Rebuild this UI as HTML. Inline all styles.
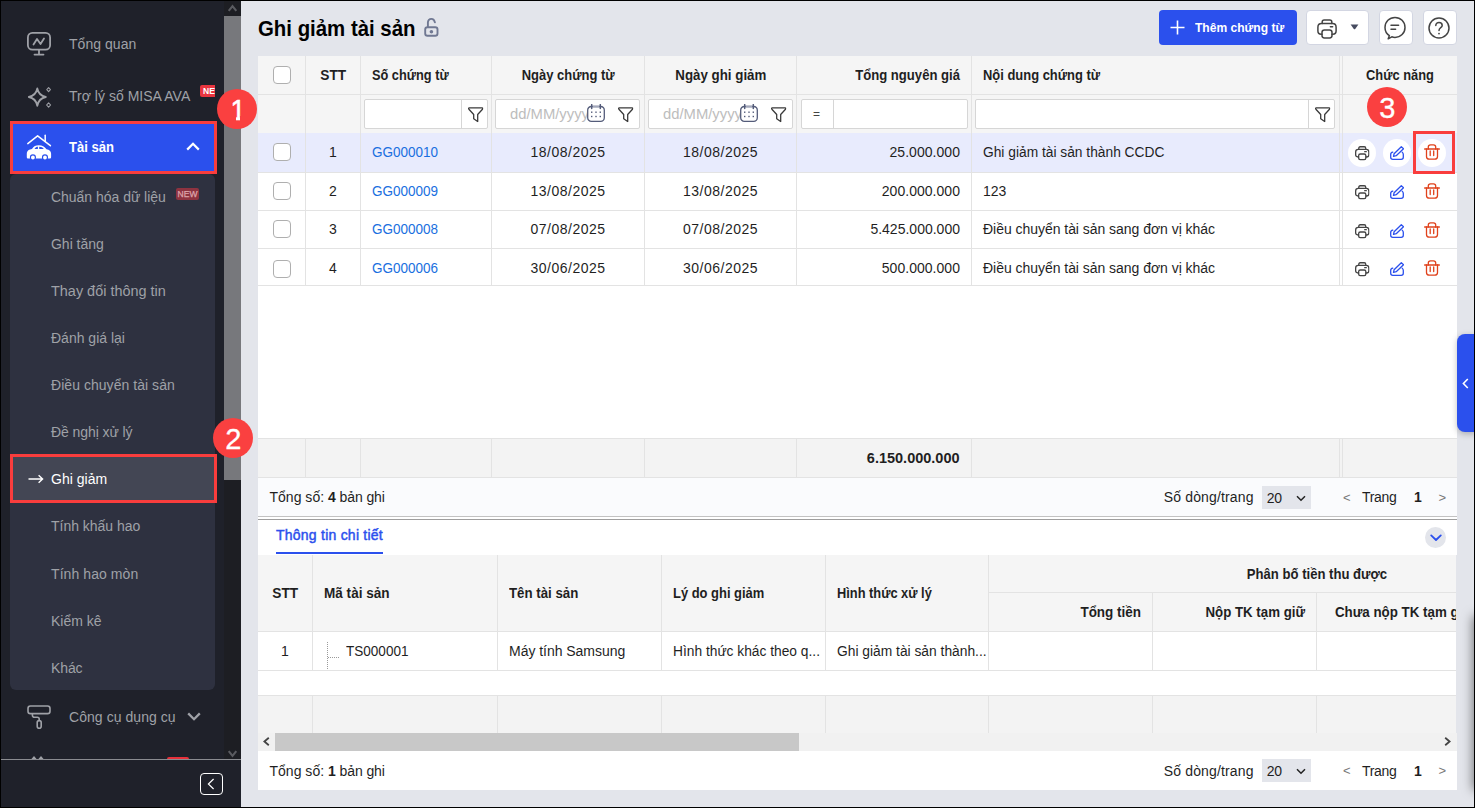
<!DOCTYPE html>
<html lang="vi">
<head>
<meta charset="utf-8">
<title>Ghi giảm tài sản</title>
<style>
*{box-sizing:border-box;margin:0;padding:0}
html,body{width:1475px;height:808px;overflow:hidden;background:#000}
body{font-family:"Liberation Sans",sans-serif;font-size:14px;color:#1f1f1f;position:relative}
.abs{position:absolute}
#frame{position:absolute;left:1px;top:1px;width:1473px;height:806px;overflow:hidden;background:#e3e5eb}
/* ---------- sidebar ---------- */
#side{position:absolute;left:0;top:0;width:240px;height:806px;background:#1f212a;overflow:hidden}
#side .mi{position:absolute;left:68px;color:#9fa1a7;font-size:14px;line-height:20px;white-space:nowrap;}
#side .si{position:absolute;left:50px;color:#9fa1a7;font-size:14px;line-height:20px;white-space:nowrap;}
#submenu{position:absolute;left:9px;top:173px;width:205px;height:516px;background:#2e3140;border-radius:6px}
#sb{position:absolute;left:223px;top:0;width:17px;height:758px;background:#1d1e23}
#sbthumb{position:absolute;left:0;top:15px;width:17px;height:464px;background:#77787c}
#sfoot{position:absolute;left:0;top:758px;width:240px;height:48px;background:#1f212a;border-top:1px solid #8a8b90}
.new{position:absolute;font-size:8px;line-height:12px;height:12px;border-radius:2px;color:#fff;font-weight:bold;text-align:center}
.redbox{position:absolute;border:3px solid #f93d3d}
.num{position:absolute;width:40px;height:40px;border-radius:50%;background:#fa4040;color:#fff;font-size:30px;line-height:40px;text-align:center;-webkit-text-stroke:.3px #fff}
.num span{display:inline-block;transform:translateY(1.4px) scaleX(.97)}
/* ---------- main ---------- */
#title{position:absolute;left:257px;top:14px;font-size:22px;font-weight:bold;color:#000;line-height:28px;white-space:nowrap}
.btn{position:absolute;top:9px;height:35px;border-radius:4px;background:#fff;border:1px solid #d3d6e2}
table{border-collapse:separate;border-spacing:0;table-layout:fixed}
td,th{overflow:hidden;white-space:nowrap;font-weight:normal}
#g1{position:absolute;left:257px;top:55px;width:1199px;background:#fff}
#g1 th{height:39px;background:#f5f5f5;border-right:1px solid #e3e3e3;border-bottom:1px solid #e3e3e3;font-weight:bold;font-size:14px;color:#1f1f1f;padding:0 11px}
#g1 tr.f td{height:38px;background:#f5f5f5;border-right:1px solid #e3e3e3;position:relative}
#g1 tr.r td{vertical-align:top;line-height:36px;border-right:1px solid #e3e3e3;border-bottom:1px solid #e3e3e3;padding:0 11px;font-size:14px;position:relative}
#g1 tr.r1 td{line-height:38px}
#g1 tr.r4 td{padding-top:2px;line-height:34px}
#g1 tr.r td .cb{margin-top:9px}
#g1 tr.r1 td .cb{margin-top:10px}
#g1 .last{border-right:0 !important;position:relative;padding:0}
#g1 .last::before{content:"";position:absolute;left:2px;top:0;bottom:0;width:1px;background:#e3e3e3}
#g1 tr.sel td{background:#e8ebfd}
.c{text-align:center}.rt{text-align:right}.l{text-align:left}
.cb{display:block;width:18px;height:18px;border:1px solid #afafaf;border-radius:4px;background:#fff;margin:0 auto}
a.lk{color:#1a6fe0;text-decoration:none}
.inp{position:absolute;top:4px;height:30px;background:#fff;border:1px solid #d6d6d6;border-radius:2px}
.ph{position:absolute;left:14px;top:6px;font-size:14px;color:#bdbdbd;line-height:16px}
#sum1{position:absolute;left:257px;top:437px;width:1199px;height:40px;background:#f3f3f3;border-top:1px solid #e3e3e3;border-bottom:1px solid #e3e3e3}
.vl{position:absolute;top:0;width:1px;height:100%;background:#e3e3e3}
.pg{position:absolute;left:257px;width:1199px;height:39px;font-size:14px;line-height:40px}
.pg>span,.sel20>span{position:absolute;white-space:pre}
.sel20{position:absolute;width:49px;height:23px;background:#e3e5eb;top:8px;line-height:24px}
#split{position:absolute;left:257px;top:515px;width:1199px;height:4px;background:#fff;border-top:1px solid #c2c2c2;border-bottom:1px solid #9e9e9e}
#tabs{position:absolute;left:257px;top:519px;width:1199px;height:35px;background:#fff}
#g2{position:absolute;left:257px;top:554px;width:1198px;height:178px;background:#fff;overflow:hidden}
#g2 table{position:absolute;left:0;top:0;width:1400px}
#g2 th{background:#f5f5f5;border-right:1px solid #e3e3e3;border-bottom:1px solid #e3e3e3;font-weight:bold;font-size:14px;padding:0 11px}
#g2 td{height:39px;border-right:1px solid #e3e3e3;border-bottom:1px solid #e3e3e3;padding:0 11px;font-size:14px;position:relative}
#sum2{position:absolute;left:0;top:140px;width:1400px;height:38px;background:#f3f3f3;border-top:1px solid #e3e3e3}
#hs{position:absolute;left:257px;top:732px;width:1199px;height:18px;background:#f1f1f1}
#hsthumb{position:absolute;left:17px;top:0;width:524px;height:18px;background:#c8c8c8}
svg{display:block;overflow:visible}
.ic{position:absolute}
</style>
</head>
<body>
<div id="frame">
<svg width="0" height="0" style="position:absolute">
 <defs>
  <symbol id="i-print" viewBox="0 0 20 20"><g fill="none" stroke-linejoin="round" stroke-linecap="round"><path d="M5.2 4.6 V3 C5.2 1.8 5.9 1 7.2 1 H12.8 C14.1 1 14.8 1.8 14.8 3 V4.6"/><path d="M5 15.2 H4.2 C2 15.2 0.9 14 0.9 12 V8.2 C0.9 5.8 2.2 4.6 4.6 4.6 H15.4 C17.8 4.6 19.1 5.8 19.1 8.2 V12 C19.1 14 18 15.2 15.800 15.2 H15"/><rect x="5" y="11" width="10" height="8" rx="2.4"/><path d="M13.4 7.800 H15.600"/></g></symbol>
  <symbol id="i-filter" viewBox="0 0 15.4 15.4"><path d="M1.400 0.800 H14 Q15.300 1 14.500 2.200 L9.700 7.500 V14.500 L5.700 11.800 V7.500 L0.900 2.200 Q0.100 1 1.400 0.800 Z" fill="none" stroke-width="1.3" stroke-linejoin="round"/></symbol>
  <symbol id="i-cal" viewBox="0 0 18 18"><g fill="none" stroke-linecap="round"><rect x="0.7" y="2.500" width="16.600" height="14.800" rx="3.600" stroke-width="1.300"/><path d="M5.600 2.600 H12.400" stroke="#a3a8bb" stroke-width="1.800" stroke-linecap="butt"/><path d="M4.700 0.600 V4.400 M13.300 0.600 V4.400" stroke-width="1.500"/></g><g stroke="none"><rect x="4" y="7.500" width="1.400" height="1.400"/><rect x="8.300" y="7.500" width="1.400" height="1.400"/><rect x="12.600" y="7.500" width="1.400" height="1.400"/><rect x="4" y="11.800" width="1.400" height="1.400"/><rect x="8.300" y="11.800" width="1.400" height="1.400"/><rect x="12.600" y="11.800" width="1.400" height="1.400"/></g></symbol>
  <symbol id="i-edit" viewBox="0 0 14 14"><g fill="none" stroke-linejoin="round" stroke-linecap="round"><path d="M11.3 0.7 L13.500 2.700 L6.200 9.700 L3.500 10.400 L4.100 7.700 Z"/><path d="M2.800 6.200 C1.300 6.400 0.700 7.300 0.700 8.600 V11.200 C0.700 12.600 1.400 13.3 2.800 13.3 H11.200 C12.600 13.3 13.3 12.600 13.3 11.200 V8.400 C13.3 7.400 13 6.700 12.200 6.200"/></g></symbol>
  <symbol id="i-trash" viewBox="0 0 16 16"><g fill="none" stroke-linecap="round" stroke-linejoin="round"><path d="M0.6 5 H15.400"/><path d="M4.300 5 V3 C4.300 1.600 5.100 0.800 6.500 0.800 H9.500 C10.900 0.800 11.700 1.600 11.700 3 V5"/><path d="M2.500 5 V12.400 C2.500 14.200 3.500 15.200 5.300 15.200 H10.700 C12.500 15.200 13.500 14.200 13.500 12.400 V5"/><path d="M6.200 7 V11.600 M9.700 7 V11.600"/></g></symbol>
 </defs>
</svg>


<!-- ================= SIDEBAR ================= -->
<div id="side">
  <div id="sb"><div id="sbthumb"></div>
    <svg class="ic" style="left:4px;top:3px" width="9" height="8" viewBox="0 0 9 8"><path d="M0.7 6.800 L4.500 2.200 L8.300 6.800" fill="none" stroke="#5a5b60" stroke-width="2.100"/></svg>
    <svg class="ic" style="left:4px;top:749.300px" width="9" height="8" viewBox="0 0 9 8"><path d="M0.7 1.200 L4.500 5.800 L8.300 1.200" fill="none" stroke="#5a5b60" stroke-width="2.100"/></svg>
  </div>
  
  <!-- Tổng quan -->
  <svg class="ic" style="left:26px;top:31px" width="24" height="24" viewBox="0 0 24 24" fill="none" stroke="#9fa1a7" stroke-width="1.8" stroke-linecap="round" stroke-linejoin="round"><rect x="0.9" y="0.9" width="22.2" height="16.8" rx="4.5"/><path d="M6.5 12.5 L10 7 L13.5 12 L17 6.5"/><path d="M12 18 V22.300 M7.500 22.600 H16.500"/></svg>
  <div class="mi" style="top:33px"><span style="letter-spacing:0.039px">Tổng quan</span></div>
  <!-- Trợ lý số -->
  <svg class="ic" style="left:26px;top:86px" width="26" height="22" viewBox="0 0 26 22" fill="none" stroke="#9fa1a7" stroke-width="1.800" stroke-linejoin="round"><path d="M10.3 1.5 C11.3 6.5 13.5 9 18.8 10 C13.5 11 11.3 13.5 10.3 18.8 C9.3 13.5 7 11 1.8 10 C7 9 9.3 6.5 10.3 1.5 Z"/><path d="M21.6 0.6 L23.4 2.6 L21.6 4.6 L19.8 2.6 Z" stroke-width="1.1"/><path d="M21.6 15.8 L23.6 18 L21.6 20.2 L19.6 18 Z" stroke-width="1.1"/></svg>
  <div class="mi" style="top:85px"><span style="letter-spacing:0.019px">Trợ lý số MISA AVA</span></div>
  <div class="abs" style="left:199px;top:84px;width:15px;height:12px;overflow:hidden"><div class="new" style="left:0;top:0;width:26px;background:#e9353f;padding-left:3px;text-align:left;font-size:8.5px;font-weight:bold;letter-spacing:0">NEW</div></div>
  <!-- Tài sản (active) -->
  <div class="abs" style="left:12px;top:123px;width:201px;height:47px;background:#2b50ed"></div>
  <svg class="ic" style="left:25px;top:133px" width="27" height="26" viewBox="0 0 27 26"><path d="M1.800 9.600 L11.600 1.800 L24.400 11.700" fill="none" stroke="#fff" stroke-width="1.5" stroke-linecap="round" stroke-linejoin="round"/><path d="M19.2 1.2 V7.6" fill="none" stroke="#fff" stroke-width="1.5" stroke-linecap="round"/><g transform="translate(0.03,0.8) scale(0.957,1)"><path d="M0.8 19.2 C0.8 15.6 3.4 14.6 6.2 14.2 C8 11.4 10 10.4 13.4 10.4 C17 10.4 19.2 11.6 21.4 14.4 C24.4 14.8 26.2 16.2 26.2 19 V22.2 C26.2 23.2 25.6 23.8 24.6 23.8 H2.4 C1.4 23.8 0.8 23.2 0.8 22.2 Z" fill="#fff"/><path d="M8.8 14.2 C9.8 12.6 11 12 12.4 12 V14.2 Z M13.8 12 C16 12 17.6 12.8 18.6 14.2 H13.8 Z" fill="#2b50ed"/><circle cx="7.2" cy="22.6" r="2.6" fill="#fff" stroke="#2b50ed" stroke-width="1.2"/><circle cx="19.8" cy="22.6" r="2.6" fill="#fff" stroke="#2b50ed" stroke-width="1.2"/></g></svg>
  <div class="mi" style="top:136px;color:#fff;font-weight:bold"><span style="display:inline-block;transform:scaleX(0.9326);transform-origin:0 50%">Tài sản</span></div>
  <svg class="ic" style="left:185px;top:141px" width="14" height="9" viewBox="0 0 14 9"><path d="M1.2 7.6 L7 1.8 L12.8 7.6" fill="none" stroke="#fff" stroke-width="2.2"/></svg>
  <div class="redbox" style="left:9px;top:120px;width:207px;height:53px"></div>
  <!-- submenu -->
  <div id="submenu">
    <div class="si" style="left:41px;top:13px"><span style="letter-spacing:-0.026px">Chuẩn hóa dữ liệu</span></div>
    <div class="si" style="left:41px;top:60px"><span style="letter-spacing:-0.017px">Ghi tăng</span></div>
    <div class="si" style="left:41px;top:107px"><span style="display:inline-block;transform:scaleX(1.0315);transform-origin:0 50%">Thay đổi thông tin</span></div>
    <div class="si" style="left:41px;top:154px"><span style="letter-spacing:-0.003px">Đánh giá lại</span></div>
    <div class="si" style="left:41px;top:201px"><span style="letter-spacing:0.044px">Điều chuyển tài sản</span></div>
    <div class="si" style="left:41px;top:248px"><span style="letter-spacing:-0.079px">Đề nghị xử lý</span></div>
    <div class="si" style="left:41px;top:342px"><span style="letter-spacing:-0.017px">Tính khấu hao</span></div>
    <div class="si" style="left:41px;top:390px"><span style="letter-spacing:0.076px">Tính hao mòn</span></div>
    <div class="si" style="left:41px;top:437px"><span style="letter-spacing:-0.011px">Kiểm kê</span></div>
    <div class="si" style="left:41px;top:484px"><span style="letter-spacing:-0.105px">Khác</span></div>
    <div class="new" style="left:166px;top:14px;width:23px;background:#8e3340;color:#dfa5ab;font-size:8.500px;font-weight:normal;letter-spacing:0;-webkit-text-stroke:.25px #dfa5ab">NEW</div>
    <div class="abs" style="left:3px;top:283px;width:201px;height:43px;background:#434654"></div>
    <svg class="ic" style="left:18px;top:300px" width="16" height="10" viewBox="0 0 16 10"><path d="M0.5 5 H14.5 M10.6 1.2 L14.6 5 L10.6 8.8" fill="none" stroke="#fff" stroke-width="1.4"/></svg>
    <div class="si" style="left:41px;top:295px;color:#fff"><span style="letter-spacing:0.021px">Ghi giảm</span></div>
  </div>
  <div class="redbox" style="left:9px;top:453px;width:207px;height:49px"></div>
  <!-- Công cụ dụng cụ -->
  <svg class="ic" style="left:26px;top:704px" width="25" height="25" viewBox="0 0 25 25" fill="none" stroke="#9fa1a7" stroke-width="1.6" stroke-linejoin="round"><rect x="1" y="1" width="22" height="7.6" rx="2.4"/><path d="M5.4 8.6 V10.2 C5.4 11.6 6.2 12.2 7.6 12.2 H10.4 C11.6 12.2 12.2 12.8 12.2 14 V15.6"/><rect x="10.2" y="15.6" width="4" height="7.6" rx="2"/></svg>
  <div class="mi" style="top:706px"><span style="letter-spacing:0.056px">Công cụ dụng cụ</span></div>
  <svg class="ic" style="left:186px;top:711px" width="14" height="9" viewBox="0 0 14 9"><path d="M1.2 1.4 L7 7.2 L12.8 1.4" fill="none" stroke="#9fa1a7" stroke-width="2.3"/></svg>
  <!-- partially visible next item -->
  <svg class="ic" style="left:30px;top:755px" width="14" height="4" viewBox="0 0 14 4"><path d="M0.500 4 L3 1 L5.500 4 M7.500 4 L10 1 L12.500 4" fill="none" stroke="#9fa1a7" stroke-width="1.3"/></svg>
  <div class="abs" style="left:166px;top:756px;width:22px;height:3px;background:#e8303a;border-radius:2px 2px 0 0"></div>
  <div id="sfoot">
    <div class="abs" style="left:199px;top:13px;width:23px;height:22px;border:1px solid #fff;border-radius:4px"></div>
    <svg class="ic" style="left:206px;top:18px" width="8" height="12" viewBox="0 0 8 12"><path d="M6.6 1 L1.4 6 L6.6 11" fill="none" stroke="#fff" stroke-width="1.2"/></svg>
  </div>

</div>

<!-- ================= MAIN ================= -->
<div id="title"><span style="display:inline-block;transform:scaleX(0.9268);transform-origin:0 50%">Ghi giảm tài sản</span></div>
<div class="abs" style="left:423.200px;top:16px"><svg width="15" height="20" viewBox="0 0 15 20" fill="none" stroke="#707892" stroke-width="1.9" stroke-linecap="round"><path d="M3.900 10 V5.600 C3.900 3.300 5.300 1.900 7.400 1.900 C9.200 1.900 10.400 3 10.900 5.400"/><rect x="1.200" y="10.300" width="12.300" height="8.500" rx="2.300"/><circle cx="7.400" cy="14.700" r="1.800" fill="#707892" stroke="none"/></svg></div>
<!-- header buttons -->
<div class="btn" style="left:1158px;width:138px;background:#2b50ed;border:0"></div>
<svg class="ic" style="left:1168.500px;top:19px" width="15" height="15" viewBox="0 0 15 15"><path d="M7.5 0.5 V14.5 M0.5 7.5 H14.5" stroke="#fff" stroke-width="1.6" fill="none"/></svg>
<div class="abs" style="left:1193.700px;top:19px;font-size:13px;font-weight:bold;color:#fff;line-height:16px;white-space:nowrap"><span style="display:inline-block;transform:scaleX(0.9281);transform-origin:0 50%">Thêm chứng từ</span></div>
<div class="btn" style="left:1305px;width:63px"></div>
<svg class="ic" style="left:1316px;top:17.500px;stroke:#444;stroke-width:1.5" width="20" height="20"><use href="#i-print"/></svg>
<svg class="ic" style="left:1349px;top:23px" width="9" height="6" viewBox="0 0 9 6"><path d="M0.6 0.6 H8.4 L5.2 5 Q4.5 5.6 3.8 5 Z" fill="#474c60"/></svg>
<div class="btn" style="left:1378px;width:34px"></div>
<svg class="ic" style="left:1383.400px;top:15px" width="22" height="24" viewBox="0 0 22 24" fill="none" stroke="#444" stroke-width="1.5" stroke-linecap="round" stroke-linejoin="round"><path d="M5.4 19.6 C2.6 17.8 1 15 1 11.4 C1 5.6 5.4 1.4 11 1.4 C16.6 1.4 21 5.6 21 11.4 C21 17.2 16.6 21.4 11 21.4 C9.8 21.4 8.8 21.2 7.8 20.8 L4.2 22.8 Z"/><path d="M7 9.2 H14.6 M7 13.2 H11.6"/></svg>
<div class="btn" style="left:1422px;width:34px"></div>
<svg class="ic" style="left:1427.200px;top:16.200px" width="22" height="22" viewBox="0 0 22 22" fill="none" stroke="#444" stroke-width="1.5" stroke-linecap="round"><circle cx="11" cy="11" r="10"/><path d="M7.8 8.6 C7.8 6.6 9.2 5.4 11 5.4 C12.8 5.4 14.2 6.6 14.2 8.4 C14.2 10.6 11 10.8 11 13.4"/><circle cx="11" cy="16.6" r="0.9" fill="#444" stroke="none"/></svg>

<table id="g1">
 <colgroup><col style="width:48px"><col style="width:55px"><col style="width:131px"><col style="width:153px"><col style="width:152px"><col style="width:175px"><col style="width:368px"><col style="width:117px"></colgroup>
 <thead>
  <tr class="h"><th style="padding-left:0;padding-right:0"><span class="cb"></span></th><th class="c" style="padding-left:0;padding-right:0"><span style="display:inline-block;transform:scaleX(0.9791);transform-origin:50% 50%">STT</span></th><th class="l"><span style="display:inline-block;transform:scaleX(0.9124);transform-origin:0 50%">Số chứng từ</span></th><th class="c" style="padding-left:0;padding-right:0"><span style="display:inline-block;transform:scaleX(0.9272);transform-origin:50% 50%">Ngày chứng từ</span></th><th class="c" style="padding-left:0;padding-right:0"><span style="display:inline-block;transform:scaleX(0.9510);transform-origin:50% 50%">Ngày ghi giảm</span></th><th class="rt"><span style="display:inline-block;transform:scaleX(0.9357);transform-origin:100% 50%">Tổng nguyên giá</span></th><th class="l"><span style="display:inline-block;transform:scaleX(0.9242);transform-origin:0 50%">Nội dung chứng từ</span></th><th class="c last" style="padding:0 0 0 3px"><span style="display:inline-block;transform:scaleX(0.9172);transform-origin:50% 50%">Chức năng</span></th></tr>
  <tr class="f"><td></td><td></td>
   <td><div class="inp" style="left:3px;width:124px"><span class="abs" style="left:96px;top:0;width:1px;height:28px;background:#d6d6d6"></span><svg class="ic" style="left:103px;top:6.500px;stroke:#3a3a3a" width="15.400" height="15.400"><use href="#i-filter"/></svg></div></td>
   <td><div class="inp" style="left:3px;width:145px"><span class="ph"><span style="display:inline-block;transform:scaleX(1.0577);transform-origin:0 50%">dd/MM/yyyy</span></span><svg class="ic" style="left:91px;top:4px;stroke:#545c7a;fill:#545c7a;background:#fff" width="18" height="18"><use href="#i-cal"/></svg><svg class="ic" style="left:122px;top:6.500px;stroke:#3a3a3a" width="15.400" height="15.400"><use href="#i-filter"/></svg></div></td>
   <td><div class="inp" style="left:3px;width:145px"><span class="ph"><span style="display:inline-block;transform:scaleX(1.0577);transform-origin:0 50%">dd/MM/yyyy</span></span><svg class="ic" style="left:91px;top:4px;stroke:#545c7a;fill:#545c7a;background:#fff" width="18" height="18"><use href="#i-cal"/></svg><svg class="ic" style="left:122px;top:6.500px;stroke:#3a3a3a" width="15.400" height="15.400"><use href="#i-filter"/></svg></div></td>
   <td><div class="inp" style="left:4px;width:167px"><span class="abs" style="left:11px;top:6px;font-size:12px;line-height:16px;color:#444">=</span><span class="abs" style="left:31px;top:0;width:1px;height:28px;background:#d6d6d6"></span></div></td>
   <td><div class="inp" style="left:3px;width:360px"><span class="abs" style="left:332px;top:0;width:1px;height:28px;background:#d6d6d6"></span><svg class="ic" style="left:339px;top:6.500px;stroke:#3a3a3a" width="15.400" height="15.400"><use href="#i-filter"/></svg></div></td>
   <td class="last"></td></tr>
 </thead>
 <tbody>
  <tr class="r sel r1" style="height:40px"><td class="c" style="padding-left:0;padding-right:0"><span class="cb"></span></td><td class="c" style="padding-left:0;padding-right:0">1</td><td class="l"><a class="lk"><span style="display:inline-block;transform:scaleX(0.9635);transform-origin:0 50%">GG000010</span></a></td><td class="c" style="padding-left:0;padding-right:0"><span style="letter-spacing:0.492px">18/08/2025</span></td><td class="c" style="padding-left:0;padding-right:0"><span style="letter-spacing:0.492px">18/08/2025</span></td><td class="rt"><span style="letter-spacing:0.042px">25.000.000</span></td><td class="l"><span style="display:inline-block;transform:scaleX(0.9836);transform-origin:0 50%">Ghi giảm tài sản thành CCDC</span></td><td class="last"><span class="abs" style="left:8px;top:6px;width:28px;height:28px;border-radius:50%;background:#fff"></span><svg class="ic" style="left:14.75px;top:12.75px;stroke:#444;stroke-width:1.8" width="14.5" height="14.5"><use href="#i-print"/></svg><span class="abs" style="left:43px;top:6px;width:28px;height:28px;border-radius:50%;background:#fff"></span><svg class="ic" style="left:50.00px;top:12.70px;stroke:#2b50ed;stroke-width:1.3" width="14" height="14"><use href="#i-edit"/></svg><span class="abs" style="left:78px;top:6px;width:28px;height:28px;border-radius:50%;background:#fff"></span><svg class="ic" style="left:84.00px;top:11.20px;stroke:#e0421c;stroke-width:1.3" width="16" height="16"><use href="#i-trash"/></svg></td></tr>
  <tr class="r" style="height:38px"><td class="c" style="padding-left:0;padding-right:0"><span class="cb"></span></td><td class="c" style="padding-left:0;padding-right:0">2</td><td class="l"><a class="lk"><span style="display:inline-block;transform:scaleX(0.9635);transform-origin:0 50%">GG000009</span></a></td><td class="c" style="padding-left:0;padding-right:0"><span style="letter-spacing:0.492px">13/08/2025</span></td><td class="c" style="padding-left:0;padding-right:0"><span style="letter-spacing:0.492px">13/08/2025</span></td><td class="rt"><span style="letter-spacing:0.031px">200.000.000</span></td><td class="l"><span style="letter-spacing:-0.020px">123</span></td><td class="last"><svg class="ic" style="left:14.75px;top:11.75px;stroke:#444;stroke-width:1.8" width="14.5" height="14.5"><use href="#i-print"/></svg><svg class="ic" style="left:50.00px;top:11.70px;stroke:#2b50ed;stroke-width:1.3" width="14" height="14"><use href="#i-edit"/></svg><svg class="ic" style="left:84.00px;top:10.20px;stroke:#e0421c;stroke-width:1.3" width="16" height="16"><use href="#i-trash"/></svg></td></tr>
  <tr class="r" style="height:38px"><td class="c" style="padding-left:0;padding-right:0"><span class="cb"></span></td><td class="c" style="padding-left:0;padding-right:0">3</td><td class="l"><a class="lk"><span style="display:inline-block;transform:scaleX(0.9635);transform-origin:0 50%">GG000008</span></a></td><td class="c" style="padding-left:0;padding-right:0"><span style="letter-spacing:0.492px">07/08/2025</span></td><td class="c" style="padding-left:0;padding-right:0"><span style="letter-spacing:0.492px">07/08/2025</span></td><td class="rt"><span style="letter-spacing:0.005px">5.425.000.000</span></td><td class="l"><span style="letter-spacing:-0.037px">Điều chuyển tài sản sang đơn vị khác</span></td><td class="last"><svg class="ic" style="left:14.75px;top:12.75px;stroke:#444;stroke-width:1.8" width="14.5" height="14.5"><use href="#i-print"/></svg><svg class="ic" style="left:50.00px;top:12.70px;stroke:#2b50ed;stroke-width:1.3" width="14" height="14"><use href="#i-edit"/></svg><svg class="ic" style="left:84.00px;top:11.20px;stroke:#e0421c;stroke-width:1.3" width="16" height="16"><use href="#i-trash"/></svg></td></tr>
  <tr class="r r4" style="height:37px"><td class="c" style="padding-left:0;padding-right:0"><span class="cb"></span></td><td class="c" style="padding-left:0;padding-right:0">4</td><td class="l"><a class="lk"><span style="display:inline-block;transform:scaleX(0.9635);transform-origin:0 50%">GG000006</span></a></td><td class="c" style="padding-left:0;padding-right:0"><span style="letter-spacing:0.492px">30/06/2025</span></td><td class="c" style="padding-left:0;padding-right:0"><span style="letter-spacing:0.492px">30/06/2025</span></td><td class="rt"><span style="letter-spacing:0.031px">500.000.000</span></td><td class="l"><span style="letter-spacing:-0.037px">Điều chuyển tài sản sang đơn vị khác</span></td><td class="last"><svg class="ic" style="left:14.75px;top:12.75px;stroke:#444;stroke-width:1.8" width="14.5" height="14.5"><use href="#i-print"/></svg><svg class="ic" style="left:50.00px;top:12.70px;stroke:#2b50ed;stroke-width:1.3" width="14" height="14"><use href="#i-edit"/></svg><svg class="ic" style="left:84.00px;top:11.20px;stroke:#e0421c;stroke-width:1.3" width="16" height="16"><use href="#i-trash"/></svg></td></tr>
 </tbody>
</table>
<div class="abs" style="left:257px;top:285px;width:1199px;height:152px;background:#fff"></div>
<div id="sum1">
 <i class="vl" style="left:47px"></i><i class="vl" style="left:102px"></i><i class="vl" style="left:233px"></i><i class="vl" style="left:386px"></i><i class="vl" style="left:538px"></i><i class="vl" style="left:713px"></i><i class="vl" style="left:1081px"></i><i class="vl" style="left:1084px"></i>
 <div class="abs" style="left:537.500px;top:0;width:175px;padding-right:11px;text-align:right;font-weight:bold;font-size:14px;line-height:38px"><span style="display:inline-block;transform:scaleX(1.0354);transform-origin:100% 50%">6.150.000.000</span></div>
</div>
<div class="pg" style="top:477px;height:38px;line-height:39px;background:#fafbfd">
 <span style="left:11.500px"><span style="letter-spacing:0.014px">Tổng số: </span><b>4</b><span style="letter-spacing:-0.104px"> bản ghi</span></span>
 <span style="left:905.800px"><span style="letter-spacing:0.141px">Số dòng/trang</span></span>
 <div class="sel20" style="left:1004px"><span style="left:4.700px"><span style="letter-spacing:-0.139px">20</span></span><svg class="ic" style="left:34px;top:8.500px" width="10" height="7" viewBox="0 0 10 7"><path d="M1 1.2 L5 5.2 L9 1.2" fill="none" stroke="#222" stroke-width="1.5"/></svg></div>
 <span style="left:1085px;color:#777;font-size:13px">&lt;</span><span style="left:1104px"><span style="letter-spacing:-0.292px">Trang</span></span><span style="left:1156px"><b>1</b></span><span style="left:1180.500px;color:#777;font-size:13px">&gt;</span>
</div>
<div id="split"></div>


<div id="tabs">
 <div class="abs" style="left:18px;top:5px;font-size:14px;line-height:20px;color:#2b50ed;white-space:nowrap;-webkit-text-stroke:.45px #2b50ed"><span style="letter-spacing:0.237px">Thông tin chi tiết</span></div>
 <div class="abs" style="left:18px;top:32px;width:107px;height:2px;background:#2b50ed"></div>
 <div class="abs" style="left:1167px;top:6.500px;width:21px;height:21px;border-radius:50%;background:#e3e5eb"></div>
 <svg class="ic" style="left:1171.500px;top:13.500px" width="12" height="8" viewBox="0 0 12 8"><path d="M1.2 1.4 L6 6 L10.800 1.4" fill="none" stroke="#2b50ed" stroke-width="1.8" stroke-linecap="round" stroke-linejoin="round"/></svg>
</div>
<div id="g2">
 <table>
  <colgroup><col style="width:55px"><col style="width:185px"><col style="width:164px"><col style="width:164px"><col style="width:163px"><col style="width:164px"><col style="width:164px"><col style="width:164px"><col style="width:177px"></colgroup>
  <thead>
   <tr><th rowspan="2" class="c" style="height:77px;padding:0"><span style="display:inline-block;transform:scaleX(0.9791);transform-origin:50% 50%">STT</span></th><th rowspan="2" class="l"><span style="display:inline-block;transform:scaleX(0.9689);transform-origin:0 50%">Mã tài sản</span></th><th rowspan="2" class="l"><span style="display:inline-block;transform:scaleX(0.9475);transform-origin:0 50%">Tên tài sản</span></th><th rowspan="2" class="l"><span style="display:inline-block;transform:scaleX(0.9243);transform-origin:0 50%">Lý do ghi giảm</span></th><th rowspan="2" class="l"><span style="display:inline-block;transform:scaleX(0.9158);transform-origin:0 50%">Hình thức xử lý</span></th><th colspan="4" class="c" style="height:38px"><span style="position:relative;left:-6.500px"><span style="display:inline-block;transform:scaleX(0.9354);transform-origin:50% 50%">Phân bố tiền thu được</span></span></th></tr>
   <tr><th class="rt" style="height:39px"><span style="display:inline-block;transform:scaleX(0.9619);transform-origin:100% 50%">Tổng tiền</span></th><th class="rt"><span style="display:inline-block;transform:scaleX(0.9473);transform-origin:100% 50%">Nộp TK tạm giữ</span></th><th class="rt"><span style="display:inline-block;transform:scaleX(0.9518);transform-origin:100% 50%">Chưa nộp TK tạm giữ</span></th><th class="rt">Chi phí xử lý</th></tr>
  </thead>
  <tbody>
   <tr><td class="c" style="padding:0">1</td><td class="l" style="padding-left:33px"><span class="abs" style="left:14px;top:10px;height:29px;border-left:1px dotted #9a9a9a"></span><span class="abs" style="left:15px;top:25px;width:11px;border-top:1px dotted #9a9a9a"></span><span style="display:inline-block;transform:scaleX(0.9674);transform-origin:0 50%">TS000001</span></td><td class="l"><span style="letter-spacing:-0.033px">Máy tính Samsung</span></td><td class="l"><span style="display:inline-block;transform:scaleX(0.9835);transform-origin:0 50%">Hình thức khác theo q...</span></td><td class="l" style="padding-right:0"><span style="display:inline-block;transform:scaleX(0.9857);transform-origin:0 50%">Ghi giảm tài sản thành...</span></td><td></td><td></td><td></td><td></td></tr>
  </tbody>
 </table>
 <div id="sum2"><i class="vl" style="left:54px"></i><i class="vl" style="left:239px"></i><i class="vl" style="left:403px"></i><i class="vl" style="left:567px"></i><i class="vl" style="left:730px"></i><i class="vl" style="left:894px"></i><i class="vl" style="left:1058px"></i></div>
</div>
<div id="hs"><div id="hsthumb"></div>
 <svg class="ic" style="left:5px;top:4px" width="7" height="9" viewBox="0 0 7 9"><path d="M5.800 0.8 L1.4 4.500 L5.800 8.200" fill="none" stroke="#444" stroke-width="1.8"/></svg>
 <svg class="ic" style="left:1186px;top:4px" width="7" height="9" viewBox="0 0 7 9"><path d="M1.2 0.8 L5.600 4.500 L1.2 8.200" fill="none" stroke="#444" stroke-width="1.8"/></svg>
</div>
<div class="pg" style="top:750px;background:#fff">
 <span style="left:11.500px"><span style="letter-spacing:0.014px">Tổng số: </span><b>1</b><span style="letter-spacing:-0.104px"> bản ghi</span></span>
 <span style="left:905.800px"><span style="letter-spacing:0.141px">Số dòng/trang</span></span>
 <div class="sel20" style="left:1004px"><span style="left:4.700px"><span style="letter-spacing:-0.139px">20</span></span><svg class="ic" style="left:34px;top:8.500px" width="10" height="7" viewBox="0 0 10 7"><path d="M1 1.2 L5 5.2 L9 1.2" fill="none" stroke="#222" stroke-width="1.5"/></svg></div>
 <span style="left:1085px;color:#777;font-size:13px">&lt;</span><span style="left:1104px"><span style="letter-spacing:-0.292px">Trang</span></span><span style="left:1156px"><b>1</b></span><span style="left:1180.500px;color:#777;font-size:13px">&gt;</span>
</div>
<!-- side tab -->
<div class="abs" style="left:1456px;top:333px;width:20px;height:98px;background:#2b50ed;border-radius:8px 0 0 8px;box-shadow:0 2px 6px rgba(0,0,0,.25)"></div>
<svg class="ic" style="left:1461px;top:377px" width="7" height="11" viewBox="0 0 7 11"><path d="M5.800 1 L1.4 5.500 L5.800 10" fill="none" stroke="#fff" stroke-width="1.6"/></svg>
<!-- right shadow -->
<div class="abs" style="left:1477px;top:618px;width:20px;height:168px;box-shadow:-2px 0 11px 3px rgba(0,0,0,.5)"></div>
<!-- step numbers -->
<div class="num" style="left:216px;top:88px"><span style="font-size:29px;transform:translate(.9px,1.2px) scaleX(.94);-webkit-text-stroke:.5px #fff">1</span><i class="abs" style="left:10px;top:26.500px;width:9.200px;height:5px;background:#fa4040"></i><i class="abs" style="left:23px;top:26.500px;width:7px;height:5px;background:#fa4040"></i></div>
<div class="num" style="left:212px;top:417px"><span>2</span></div>
<div class="num" style="left:1366px;top:86px"><span>3</span></div>
<div class="redbox" style="left:1412px;top:130px;width:42px;height:43px"></div>



</div>
</body>
</html>
